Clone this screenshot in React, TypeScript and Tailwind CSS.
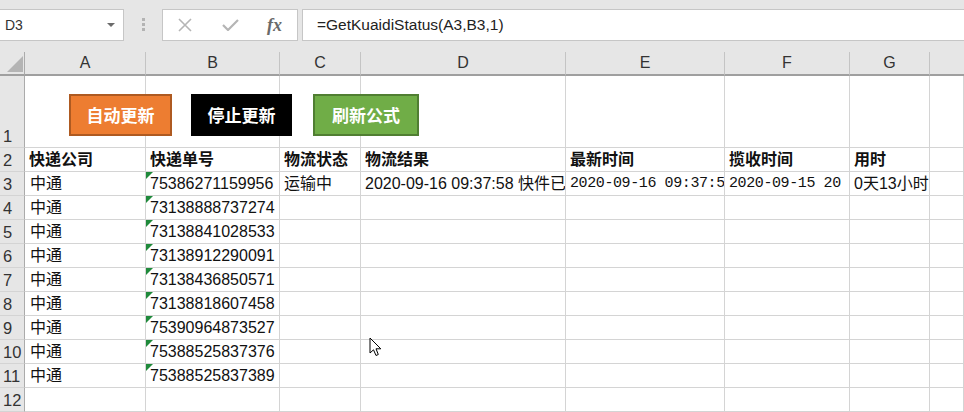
import React from "react"

const cols = ["A", "B", "C", "D", "E", "F", "G", ""]

const ids = [
  "75386271159956",
  "73138888737274",
  "73138841028533",
  "73138912290091",
  "73138436850571",
  "73138818607458",
  "75390964873527",
  "75388525837376",
  "75388525837389",
]

const heads = ["快递公司", "快递单号", "物流状态", "物流结果", "最新时间", "揽收时间", "用时", ""]

const gridCols = "grid grid-cols-[25px_121px_134px_81px_205px_159px_125px_80px_1fr]"
const mono = "font-['Liberation_Mono','Noto_Sans_CJK_SC',monospace] text-[15px] tracking-[-0.4px]"

const Cell = ({ children, className = "text-[16px] pl-[4px]" }: { children?: React.ReactNode; className?: string }) => (
  <div className={`relative flex items-end overflow-hidden whitespace-nowrap border-r border-b border-[#d4d4d4] pb-[1px] leading-[20px] text-[#111] ${className}`}>
    {children}
  </div>
)

const RowNum = ({ n, h = "h-[24px]" }: { n: number; h?: string }) => (
  <div className={`${h} flex items-end border-r border-r-[#ababab] border-b border-b-[#d4d4d4] bg-[#e6e6e6] pl-[3px] pb-[1px] text-[16.5px] leading-[20px] text-[#333]`}>
    {n}
  </div>
)

const Flag = () => (
  <svg className="absolute left-0 top-0" width="7" height="7" viewBox="0 0 7 7">
    <polygon points="0,0 7,0 0,7" fill="#1f8a3b" />
  </svg>
)

export default function App() {
  return (
    <div className="relative h-[412px] w-[964px] overflow-hidden bg-white font-['Liberation_Sans','Noto_Sans_CJK_SC',sans-serif]">
      {/* formula bar */}
      <div className="flex h-[52px] items-start bg-[#e6e6e6] pt-[9px]">
        <div className="flex h-[32px] w-[124px] items-center justify-between border-y border-r border-[#c6c6c6] bg-white pl-[5px] pr-[8px]">
          <span className="text-[14px] text-[#333]">D3</span>
          <svg width="8" height="4" viewBox="0 0 8 4">
            <polygon points="0,0 8,0 4,4" fill="#6b6b6b" />
          </svg>
        </div>
        <div className="flex w-[38px] flex-col items-center gap-[2px] pt-[9px]">
          <span className="h-[3px] w-[3px] bg-[#b3b3b3]" />
          <span className="h-[3px] w-[3px] bg-[#b3b3b3]" />
          <span className="h-[3px] w-[3px] bg-[#b3b3b3]" />
        </div>
        <div className="flex h-[32px] w-[136px] items-center border border-[#c6c6c6] bg-white">
          <svg className="ml-[14px]" width="16" height="14" viewBox="0 0 16 14">
            <path d="M2 1 L14 13 M14 1 L2 13" stroke="#b5b5b5" strokeWidth="1.6" fill="none" />
          </svg>
          <svg className="ml-[29px]" width="17" height="12" viewBox="0 0 17 12">
            <path d="M1 6 L6 11 L16 1" stroke="#b5b5b5" strokeWidth="2.2" fill="none" />
          </svg>
          <span className="ml-[28px] font-['Liberation_Serif',serif] text-[18px] font-bold italic text-[#6a6a6a]">fx</span>
        </div>
        <div className="ml-[4px] flex h-[32px] flex-1 items-center border-y border-l border-[#c6c6c6] bg-white pl-[14px] text-[15.5px] text-[#222]">
          =GetKuaidiStatus(A3,B3,1)
        </div>
      </div>

      {/* column header */}
      <div className={`${gridCols} h-[24px] bg-[#e6e6e6]`}>
        <div className="relative border-r border-b-2 border-r-[#ababab] border-b-[#9f9f9f]">
          <svg className="absolute left-[7px] top-[4px]" width="16" height="16" viewBox="0 0 16 16">
            <polygon points="16,0 16,16 0,16" fill="#b4b4b4" />
          </svg>
        </div>
        {cols.map((c, i) => (
          <div key={i} className="flex items-end justify-center border-b-2 border-b-[#9f9f9f] pb-[1px] text-[16px] leading-[20px] text-[#333] [&:not(:last-child)]:border-r [&:not(:last-child)]:border-r-[#c4c4c4]">
            {c}
          </div>
        ))}
      </div>

      {/* sheet */}
      <div className={gridCols}>
        <RowNum n={1} h="h-[72px]" />
        {cols.map((_, i) => <Cell key={i} className="h-[72px]" />)}

        <RowNum n={2} />
        {heads.map((h, i) => (
          <Cell key={i} className="text-[16px] pl-[4px] font-bold">{h}</Cell>
        ))}

        {ids.map((id, r) => (
          <React.Fragment key={id}>
            <RowNum n={r + 3} />
            <Cell className="text-[16px] pl-[5px]">中通</Cell>
            <Cell><Flag />{id}</Cell>
            <Cell>{r === 0 ? "运输中" : ""}</Cell>
            <Cell>{r === 0 ? "2020-09-16 09:37:58 快件已到达" : ""}</Cell>
            <Cell className={`${mono} pl-[4px]`}>{r === 0 ? "2020-09-16 09:37:58" : ""}</Cell>
            <Cell className={`${mono} pl-[4px]`}>{r === 0 ? "2020-09-15 20" : ""}</Cell>
            <Cell>{r === 0 ? "0天13小时" : ""}</Cell>
            <Cell />
          </React.Fragment>
        ))}

        <RowNum n={12} />
        {cols.map((_, i) => <Cell key={i} />)}
      </div>

      {/* floating buttons */}
      <div className="absolute left-[69px] top-[94px] flex h-[42px] w-[103px] items-center justify-center border-2 border-[#ae5a21] bg-[#ed7d31] font-['Noto_Sans_CJK_SC',sans-serif] text-[17px] font-semibold text-white">
        自动更新
      </div>
      <div className="absolute left-[191px] top-[94px] flex h-[42px] w-[101px] items-center justify-center bg-black font-['Noto_Sans_CJK_SC',sans-serif] text-[17px] font-semibold text-white">
        停止更新
      </div>
      <div className="absolute left-[313px] top-[94px] flex h-[42px] w-[106px] items-center justify-center border-2 border-[#507e32] bg-[#70ad47] font-['Noto_Sans_CJK_SC',sans-serif] text-[17px] font-semibold text-white">
        刷新公式
      </div>

      {/* mouse pointer */}
      <svg className="absolute left-[369px] top-[337px]" width="13" height="20" viewBox="0 0 13 20">
        <path d="M1 1 L1 16 L4.5 12.8 L7 18.5 L9.3 17.5 L7 11.8 L11.8 11.8 Z" fill="white" stroke="black" strokeWidth="1" strokeLinejoin="round" />
      </svg>
    </div>
  )
}
